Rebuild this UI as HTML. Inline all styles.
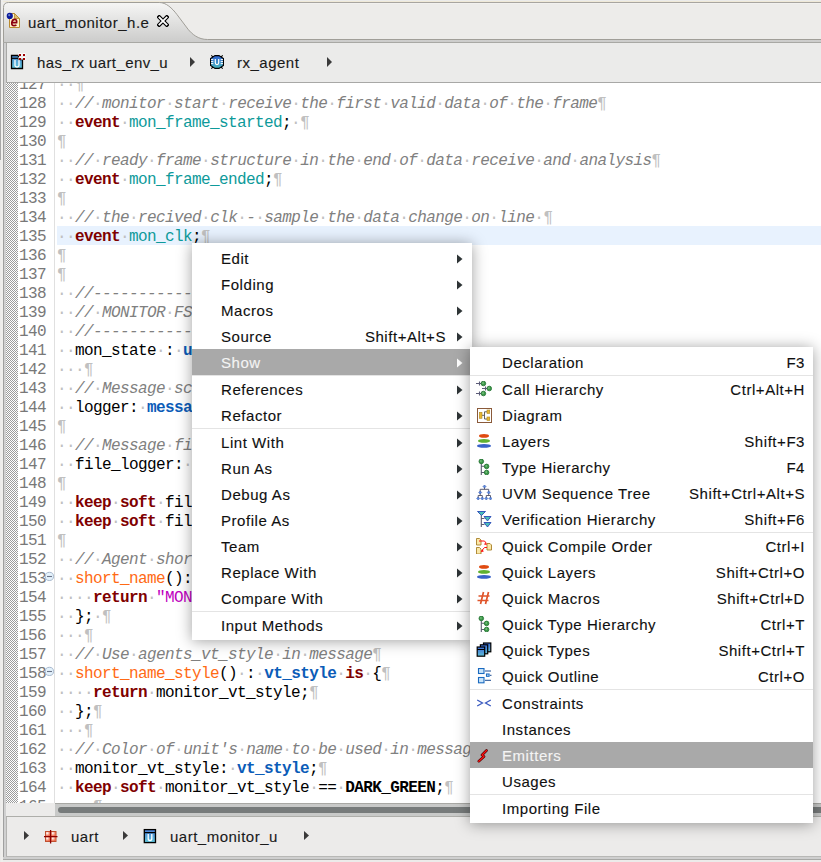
<!DOCTYPE html><html><head><meta charset="utf-8"><style>*{margin:0;padding:0;box-sizing:border-box}
html,body{width:821px;height:862px;overflow:hidden}
body{position:relative;background:#ecebea;font-family:"Liberation Sans",sans-serif;font-size:15px;color:#101010}
.abs{position:absolute}
#topstrip{left:0;top:0;width:821px;height:2px;background:#efeeec}
#tabbar{left:0;top:2px;width:821px;height:40px;background:#ebebea;border-bottom:1px solid #a8a8a6}
#leftline{left:0;top:0;width:1px;height:160px;background:#a8a8a8}
#leftline2{left:1px;top:0;width:2px;height:862px;background:#efeeec}
#leftline0{left:0;top:160px;width:1px;height:702px;background:#ecebea}
#leftline3{left:3px;top:43px;width:1px;height:817px;background:#a0a0a0}
#leftline4{left:4px;top:43px;width:2px;height:814px;background:#d0d0d0}
#tab{left:3px;top:2px;width:210px;height:40px}
#tabtxt{left:28px;top:14px;letter-spacing:0.5px;color:#1a1a1a}
#crumb{left:6px;top:43px;width:815px;height:40px;background:#ebebea;border-left:1px solid #a8a8a6;border-bottom:1px solid #a8a8a6}
.ct{position:absolute;letter-spacing:0.5px;color:#1a1a1a}
#editor{left:6px;top:83px;width:815px;height:720px;background:#ffffff;overflow:hidden}
#ruler{left:0;top:0;width:12px;height:720px;background-color:#fff;background-image:linear-gradient(45deg,#9c9c9c 25%,transparent 25%,transparent 75%,#9c9c9c 75%),linear-gradient(45deg,#9c9c9c 25%,transparent 25%,transparent 75%,#9c9c9c 75%);background-size:2px 2px;background-position:0 0,1px 1px}
#nums{left:12px;top:0;width:36px;height:720px;background:#fff}
#sepl{left:48px;top:0;width:1px;height:720px;background:#e0e0e0}
.nm{position:absolute;left:12px;width:28px;text-align:right;height:19px;line-height:19px;font-family:"Liberation Mono",monospace;font-size:16px;letter-spacing:-0.6px;color:#787878;padding-top:2px}
.ln{position:absolute;left:51px;width:770px;height:19px;line-height:19px;font-family:"Liberation Mono",monospace;font-size:16px;letter-spacing:-0.6px;color:#000;white-space:pre;padding-top:2px}
.ln.hl{background:#e8f2fe}
i.w{font-style:normal;color:#c0c0c0}
.k{color:#7f0000;font-weight:bold}
.id{color:#0e9a9a}
.c{color:#808080;font-style:italic}
.t{color:#0b5cb8;font-weight:bold}
.s{color:#c000c0}
.f{color:#ff6a14}
.b{font-weight:bold}
#hscroll{left:6px;top:803px;width:815px;height:14px;background:#ecebea;border-bottom:1px solid #aeaeaa}
#htrack{left:55px;top:803px;width:766px;height:14px;background:#c8c9c8;border-top:1px solid #a8a8a4;border-bottom:1px solid #aeaeaa}
#hthumb{left:58px;top:807px;width:770px;height:6px;background:#777b7b;border-radius:3px}
#bottombar{left:6px;top:817px;width:815px;height:40px;background:#ecebea;border-left:1px solid #b4b4b2;border-bottom:1px solid #b8b8b6}
#bottomfill{left:3px;top:857px;width:818px;height:3px;background:#cfcfcf;border-bottom:1px solid #a8a8a6}
.menu{position:absolute;background:#fff;box-shadow:0 1px 14px rgba(0,0,0,0.38)}
.mi{position:absolute;left:0;width:100%;height:26px}
.mi.sel{background:#a9a9a9;color:#f4f4f4}
.mi .lb{position:absolute;left:29px;top:5px;letter-spacing:0.55px;white-space:pre}
.sub .mi .lb{left:32px}
.mi .acc{position:absolute;right:26px;top:5px;letter-spacing:0.55px;white-space:pre}
.sub .mi .acc{right:8px}
.mi .ar{position:absolute;left:265px;top:9px}
.mi .ic{position:absolute;left:6px;top:5px;width:16px;height:16px}
.mi .ic svg{display:block}
.sep{position:absolute;left:0;width:100%;height:1px;background:#e4e4e4}
.mi .lb,.mi .acc,.ct,#tabtxt{-webkit-text-stroke:0.12px currentColor}
</style></head><body><svg class="abs" style="left:0;top:0" width="821" height="43" viewBox="0 0 821 43">
<defs><linearGradient id="tg" x1="0" y1="0" x2="0" y2="1"><stop offset="0" stop-color="#f6f6f5"/><stop offset="1" stop-color="#cbcbca"/></linearGradient></defs>
<rect x="0" y="0" width="821" height="43" fill="#ebebea"/>
<rect x="0" y="1" width="821" height="1" fill="#efe9d8"/>
<rect x="3" y="2" width="818" height="41" fill="#edecea"/>
<rect x="3" y="3" width="818" height="1" fill="#f2f1ef"/>
<rect x="159" y="2" width="662" height="1" fill="#a8a5a0"/>
<path d="M3.5 43V7.5Q3.5 2.5 8.5 2.5H159.4C166 2.5 172 8 177 14.6L188 29.2C192 34 198 39.5 207.6 39.5H821V43Z" fill="url(#tg)"/>
<path d="M3.5 43V7.5Q3.5 2.5 8.5 2.5H159.4C166 2.5 172 8 177 14.6L188 29.2C192 34 198 39.5 207.6 39.5H821" fill="none" stroke="#a09e98" stroke-width="1"/>
<rect x="3" y="42" width="818" height="1" fill="#a8a8a4"/>
</svg>
<div class="abs" id="leftline"></div><div class="abs" id="leftline0"></div><div class="abs" id="leftline2"></div><div class="abs" id="leftline3"></div><div class="abs" id="leftline4"></div>
<svg class="abs" style="left:4px;top:8px" width="24" height="24" viewBox="0 0 24 24">
<path d="M5.5 5.5H10.5L15.5 10.5V19.5H5.5Z" fill="#fff6c8" stroke="#b88a30"/><path d="M10.5 5.5V10.5H15.5Z" fill="#e0c070" stroke="#b88a30" stroke-width="0.8"/>
<path d="M8.2 14.6H12.6Q13.1 11.6 10.9 11.3Q8.3 11.1 7.8 14.6Q7.5 17.7 10 17.7Q11.4 17.7 12.4 16.9" fill="none" stroke="#8c0010" stroke-width="1.7"/>
<circle cx="5.8" cy="7.9" r="3.1" fill="#0c1a9c"/><circle cx="5.2" cy="7.2" r="1.1" fill="#6a80c0"/></svg>
<div class="abs" id="tabtxt">uart_monitor_h.e</div>
<svg class="abs" style="left:157px;top:15px" width="12" height="12" viewBox="0 0 12 12"><path d="M2.2 2.2L9.8 9.8M9.8 2.2L2.2 9.8" stroke="#000" stroke-width="4" stroke-linecap="square"/><path d="M2.4 2.4L9.6 9.6M9.6 2.4L2.4 9.6" stroke="#fff" stroke-width="1.8" stroke-linecap="square"/></svg>
<div class="abs" id="crumb"></div>
<svg class="abs" style="left:6px;top:48px" width="24" height="24" viewBox="0 0 24 24">
<defs><linearGradient id="ug" x1="0" y1="0" x2="0" y2="1"><stop offset="0" stop-color="#4a8ed8"/><stop offset="1" stop-color="#62c4d8"/></linearGradient></defs>
<path d="M5.5 7.5H12.5V11.5H16.5V20.5H5.5Z" fill="url(#ug)" stroke="#000" stroke-width="1.3"/><path d="M5.5 10.3H12.5" stroke="#000" stroke-width="1.2"/>
<path d="M9 12V17.5Q9 19 11 19Q13 19 13 17.5V12" stroke="#fff" stroke-width="1.3" fill="none"/>
<rect x="12.5" y="5" width="3" height="3" fill="#fff"/><rect x="16.5" y="5" width="3" height="3" fill="#fff"/><rect x="12.5" y="9" width="3" height="3" fill="#fff"/><rect x="16.5" y="9" width="3" height="3" fill="#fff"/>
<rect x="13" y="6" width="2" height="2" fill="#9c0000"/><rect x="17" y="6" width="2" height="2" fill="#9c0000"/><rect x="13" y="10" width="2" height="2" fill="#9c0000"/><rect x="17" y="10" width="2" height="2" fill="#9c0000"/></svg>
<div class="ct" style="left:37px;top:54px;letter-spacing:0.4px">has_rx uart_env_u</div>
<svg class="abs" style="left:190px;top:57px" width="5" height="10"><path d="M0 0L5 5L0 10Z" fill="#3a3a3a"/></svg>
<svg class="abs" style="left:204px;top:50px" width="24" height="24" viewBox="0 0 24 24">
<defs><linearGradient id="bg2" x1="0" y1="0" x2="0" y2="1"><stop offset="0" stop-color="#3060d0"/><stop offset="1" stop-color="#48b8c0"/></linearGradient></defs>
<path d="M7.3 5.3L10.3 8.3M18.7 5.3L15.7 8.3M7.3 18.7L10.3 15.7M18.7 18.7L15.7 15.7" stroke="#000" stroke-width="1.1"/>
<path d="M11 5.6H15L19.4 8.6V15.4L15 18.4H11L6.6 15.4V8.6Z" fill="url(#bg2)" stroke="#000" stroke-width="1.2"/>
<path d="M7 9.6H9.3M7 11.6H9.3M7 13.6H9.3M16.7 9.6H19M16.7 11.6H19M16.7 13.6H19" stroke="#fff" stroke-width="1"/>
<path d="M11.3 9V12.8Q11.3 14.6 13 14.6Q14.7 14.6 14.7 12.8V9" stroke="#fff" stroke-width="1.2" fill="none"/></svg>
<div class="ct" style="left:237px;top:54px">rx_agent</div>
<svg class="abs" style="left:327px;top:57px" width="5" height="10"><path d="M0 0L5 5L0 10Z" fill="#3a3a3a"/></svg>
<div class="abs" id="editor">
 <div class="abs" id="ruler"></div>
 <div class="abs" id="nums"></div><div class="abs" style="left:0;top:-83px;width:60px;height:903px"><div class="nm" style="top:74px">127</div><div class="nm" style="top:93px">128</div><div class="nm" style="top:112px">129</div><div class="nm" style="top:131px">130</div><div class="nm" style="top:150px">131</div><div class="nm" style="top:169px">132</div><div class="nm" style="top:188px">133</div><div class="nm" style="top:207px">134</div><div class="nm" style="top:226px">135</div><div class="nm" style="top:245px">136</div><div class="nm" style="top:264px">137</div><div class="nm" style="top:283px">138</div><div class="nm" style="top:302px">139</div><div class="nm" style="top:321px">140</div><div class="nm" style="top:340px">141</div><div class="nm" style="top:359px">142</div><div class="nm" style="top:378px">143</div><div class="nm" style="top:397px">144</div><div class="nm" style="top:416px">145</div><div class="nm" style="top:435px">146</div><div class="nm" style="top:454px">147</div><div class="nm" style="top:473px">148</div><div class="nm" style="top:492px">149</div><div class="nm" style="top:511px">150</div><div class="nm" style="top:530px">151</div><div class="nm" style="top:549px">152</div><div class="nm" style="top:568px">153</div><div class="nm" style="top:587px">154</div><div class="nm" style="top:606px">155</div><div class="nm" style="top:625px">156</div><div class="nm" style="top:644px">157</div><div class="nm" style="top:663px">158</div><div class="nm" style="top:682px">159</div><div class="nm" style="top:701px">160</div><div class="nm" style="top:720px">161</div><div class="nm" style="top:739px">162</div><div class="nm" style="top:758px">163</div><div class="nm" style="top:777px">164</div><div class="nm" style="top:796px">165</div></div>
 <div class="abs" id="sepl"></div>
 <div class="abs" style="left:0;top:-83px;width:816px;height:903px"><div class="ln" style="top:74px"><i class="w">·</i><i class="w">·</i><i class="w">¶</i></div><div class="ln" style="top:93px"><i class="w">·</i><i class="w">·</i><span class="c">//</span><i class="w">·</i><span class="c">monitor</span><i class="w">·</i><span class="c">start</span><i class="w">·</i><span class="c">receive</span><i class="w">·</i><span class="c">the</span><i class="w">·</i><span class="c">first</span><i class="w">·</i><span class="c">valid</span><i class="w">·</i><span class="c">data</span><i class="w">·</i><span class="c">of</span><i class="w">·</i><span class="c">the</span><i class="w">·</i><span class="c">frame</span><i class="w">¶</i></div><div class="ln" style="top:112px"><i class="w">·</i><i class="w">·</i><span class="k">event</span><i class="w">·</i><span class="id">mon_frame_started</span>;<i class="w">·</i><i class="w">¶</i></div><div class="ln" style="top:131px"><i class="w">¶</i></div><div class="ln" style="top:150px"><i class="w">·</i><i class="w">·</i><span class="c">//</span><i class="w">·</i><span class="c">ready</span><i class="w">·</i><span class="c">frame</span><i class="w">·</i><span class="c">structure</span><i class="w">·</i><span class="c">in</span><i class="w">·</i><span class="c">the</span><i class="w">·</i><span class="c">end</span><i class="w">·</i><span class="c">of</span><i class="w">·</i><span class="c">data</span><i class="w">·</i><span class="c">receive</span><i class="w">·</i><span class="c">and</span><i class="w">·</i><span class="c">analysis</span><i class="w">¶</i></div><div class="ln" style="top:169px"><i class="w">·</i><i class="w">·</i><span class="k">event</span><i class="w">·</i><span class="id">mon_frame_ended</span>;<i class="w">¶</i></div><div class="ln" style="top:188px"><i class="w">¶</i></div><div class="ln" style="top:207px"><i class="w">·</i><i class="w">·</i><span class="c">//</span><i class="w">·</i><span class="c">the</span><i class="w">·</i><span class="c">recived</span><i class="w">·</i><span class="c">clk</span><i class="w">·</i><span class="c">-</span><i class="w">·</i><span class="c">sample</span><i class="w">·</i><span class="c">the</span><i class="w">·</i><span class="c">data</span><i class="w">·</i><span class="c">change</span><i class="w">·</i><span class="c">on</span><i class="w">·</i><span class="c">line</span><i class="w">·</i><i class="w">¶</i></div><div class="ln hl" style="top:226px"><i class="w">·</i><i class="w">·</i><span class="k">event</span><i class="w">·</i><span class="id">mon_clk</span>;<i class="w">¶</i></div><div class="ln" style="top:245px"><i class="w">¶</i></div><div class="ln" style="top:264px"><i class="w">¶</i></div><div class="ln" style="top:283px"><i class="w">·</i><i class="w">·</i><span class="c">//----------------------------------------</span><i class="w">¶</i></div><div class="ln" style="top:302px"><i class="w">·</i><i class="w">·</i><span class="c">//</span><i class="w">·</i><span class="c">MONITOR</span><i class="w">·</i><span class="c">FSM</span><i class="w">·</i><span class="c">STATE</span><i class="w">¶</i></div><div class="ln" style="top:321px"><i class="w">·</i><i class="w">·</i><span class="c">//----------------------------------------</span><i class="w">¶</i></div><div class="ln" style="top:340px"><i class="w">·</i><i class="w">·</i>mon_state<i class="w">·</i>:<i class="w">·</i><span class="t">uart_monitor_state_t</span>;<i class="w">¶</i></div><div class="ln" style="top:359px"><i class="w">·</i><i class="w">·</i><i class="w">·</i><i class="w">¶</i></div><div class="ln" style="top:378px"><i class="w">·</i><i class="w">·</i><span class="c">//</span><i class="w">·</i><span class="c">Message</span><i class="w">·</i><span class="c">scope</span><i class="w">·</i><span class="c">for</span><i class="w">·</i><span class="c">the</span><i class="w">·</i><span class="c">monitor</span><i class="w">¶</i></div><div class="ln" style="top:397px"><i class="w">·</i><i class="w">·</i>logger:<i class="w">·</i><span class="t">message_logger</span>;<i class="w">¶</i></div><div class="ln" style="top:416px"><i class="w">¶</i></div><div class="ln" style="top:435px"><i class="w">·</i><i class="w">·</i><span class="c">//</span><i class="w">·</i><span class="c">Message</span><i class="w">·</i><span class="c">file</span><i class="w">·</i><span class="c">logger</span><i class="w">¶</i></div><div class="ln" style="top:454px"><i class="w">·</i><i class="w">·</i>file_logger:<i class="w">·</i><span class="t">message_logger</span>;<i class="w">¶</i></div><div class="ln" style="top:473px"><i class="w">¶</i></div><div class="ln" style="top:492px"><i class="w">·</i><i class="w">·</i><span class="k">keep</span><i class="w">·</i><span class="k">soft</span><i class="w">·</i>file_logger.to_screen<i class="w">·</i>==<i class="w">·</i>FALSE;<i class="w">¶</i></div><div class="ln" style="top:511px"><i class="w">·</i><i class="w">·</i><span class="k">keep</span><i class="w">·</i><span class="k">soft</span><i class="w">·</i>file_logger.to_file<i class="w">·</i>==<i class="w">·</i>&quot;uart&quot;;<i class="w">¶</i></div><div class="ln" style="top:530px"><i class="w">¶</i></div><div class="ln" style="top:549px"><i class="w">·</i><i class="w">·</i><span class="c">//</span><i class="w">·</i><span class="c">Agent</span><i class="w">·</i><span class="c">short</span><i class="w">·</i><span class="c">name</span><i class="w">·</i><span class="c">for</span><i class="w">·</i><span class="c">messages</span><i class="w">¶</i></div><div class="ln" style="top:568px"><i class="w">·</i><i class="w">·</i><span class="f">short_name</span>():<i class="w">·</i><span class="t">string</span><i class="w">·</i><span class="k">is</span><i class="w">·</i>{<i class="w">¶</i></div><div class="ln" style="top:587px"><i class="w">·</i><i class="w">·</i><i class="w">·</i><i class="w">·</i><span class="k">return</span><i class="w">·</i><span class="s">&quot;MONITOR&quot;</span>;<i class="w">¶</i></div><div class="ln" style="top:606px"><i class="w">·</i><i class="w">·</i>};<i class="w">·</i><i class="w">¶</i></div><div class="ln" style="top:625px"><i class="w">·</i><i class="w">·</i><i class="w">·</i><i class="w">¶</i></div><div class="ln" style="top:644px"><i class="w">·</i><i class="w">·</i><span class="c">//</span><i class="w">·</i><span class="c">Use</span><i class="w">·</i><span class="c">agents_vt_style</span><i class="w">·</i><span class="c">in</span><i class="w">·</i><span class="c">message</span><i class="w">¶</i></div><div class="ln" style="top:663px"><i class="w">·</i><i class="w">·</i><span class="f">short_name_style</span>()<i class="w">·</i>:<i class="w">·</i><span class="t">vt_style</span><i class="w">·</i><span class="k">is</span><i class="w">·</i>{<i class="w">¶</i></div><div class="ln" style="top:682px"><i class="w">·</i><i class="w">·</i><i class="w">·</i><i class="w">·</i><span class="k">return</span><i class="w">·</i>monitor_vt_style;<i class="w">¶</i></div><div class="ln" style="top:701px"><i class="w">·</i><i class="w">·</i>};<i class="w">¶</i></div><div class="ln" style="top:720px"><i class="w">·</i><i class="w">·</i><i class="w">·</i><i class="w">¶</i></div><div class="ln" style="top:739px"><i class="w">·</i><i class="w">·</i><span class="c">//</span><i class="w">·</i><span class="c">Color</span><i class="w">·</i><span class="c">of</span><i class="w">·</i><span class="c">unit&#x27;s</span><i class="w">·</i><span class="c">name</span><i class="w">·</i><span class="c">to</span><i class="w">·</i><span class="c">be</span><i class="w">·</i><span class="c">used</span><i class="w">·</i><span class="c">in</span><i class="w">·</i><span class="c">messages</span><i class="w">¶</i></div><div class="ln" style="top:758px"><i class="w">·</i><i class="w">·</i>monitor_vt_style:<i class="w">·</i><span class="t">vt_style</span>;<i class="w">¶</i></div><div class="ln" style="top:777px"><i class="w">·</i><i class="w">·</i><span class="k">keep</span><i class="w">·</i><span class="k">soft</span><i class="w">·</i>monitor_vt_style<i class="w">·</i>==<i class="w">·</i><span class="b">DARK_GREEN</span>;<i class="w">¶</i></div><div class="ln" style="top:796px"><i class="w">·</i><i class="w">·</i><i class="w">·</i><i class="w">·</i><i class="w">¶</i></div></div>
</div>
<svg class="abs" style="left:44px;top:571px" width="11" height="11" viewBox="0 0 11 11"><circle cx="5.4" cy="5.4" r="4.1" fill="#e4f2fc" stroke="#a8b8cc" stroke-width="1"/><path d="M3 5.5H8" stroke="#6a7488" stroke-width="1.1"/></svg>
<svg class="abs" style="left:44px;top:666px" width="11" height="11" viewBox="0 0 11 11"><circle cx="5.4" cy="5.4" r="4.1" fill="#e4f2fc" stroke="#a8b8cc" stroke-width="1"/><path d="M3 5.5H8" stroke="#6a7488" stroke-width="1.1"/></svg>
<div class="abs" id="hscroll"></div><div class="abs" id="htrack"></div>
<div class="abs" id="hthumb"></div>
<div class="abs" id="bottombar"></div><div class="abs" id="bottomfill"></div>
<svg class="abs" style="left:24px;top:831px" width="5" height="9"><path d="M0 0L5 4.5L0 9Z" fill="#3a3a3a"/></svg>
<svg class="abs" style="left:42px;top:828px" width="18" height="18" viewBox="0 0 18 18">
<defs><radialGradient id="rg" cx="0.3" cy="0.3" r="0.7"><stop offset="0" stop-color="#fff"/><stop offset="1" stop-color="#f07050"/></radialGradient></defs>
<rect x="3.5" y="3.5" width="10.5" height="10" fill="#f48060" stroke="#c05030"/>
<rect x="4" y="4" width="4" height="4" fill="url(#rg)"/><rect x="9.5" y="4" width="4" height="4" fill="url(#rg)"/><rect x="4" y="9" width="4" height="4" fill="url(#rg)"/><rect x="9.5" y="9" width="4" height="4" fill="url(#rg)"/>
<path d="M8.6 2V15.5M2 8.6H15.5" stroke="#8c0000" stroke-width="1.3"/></svg>
<div class="ct" style="left:71px;top:828px">uart</div>
<svg class="abs" style="left:123px;top:831px" width="5" height="9"><path d="M0 0L5 4.5L0 9Z" fill="#3a3a3a"/></svg>
<svg class="abs" style="left:140px;top:826px" width="20" height="20" viewBox="0 0 20 20">
<defs><linearGradient id="ug2" x1="0" y1="0" x2="0" y2="1"><stop offset="0" stop-color="#4a80d8"/><stop offset="1" stop-color="#62c4d8"/></linearGradient></defs>
<rect x="4.3" y="3.6" width="11.2" height="13" fill="url(#ug2)" stroke="#000" stroke-width="1.3"/><path d="M4.3 6.6H15.5" stroke="#000" stroke-width="1.2"/>
<path d="M8.2 8V12.5Q8.2 14.5 10 14.5Q11.8 14.5 11.8 12.5V8" stroke="#fff" stroke-width="1.3" fill="none"/></svg>
<div class="ct" style="left:170px;top:828px">uart_monitor_u</div>
<svg class="abs" style="left:304px;top:831px" width="5" height="9"><path d="M0 0L5 4.5L0 9Z" fill="#3a3a3a"/></svg>
<div class="menu" style="left:192px;top:243px;width:280px;height:397px"><div class="mi" style="top:2px"><span class="lb">Edit</span><svg class="ar" width="6" height="10" viewBox="0 0 6 10"><path d="M0 0.5L5.5 5L0 9.5Z" fill="#2e3436"/></svg></div><div class="mi" style="top:28px"><span class="lb">Folding</span><svg class="ar" width="6" height="10" viewBox="0 0 6 10"><path d="M0 0.5L5.5 5L0 9.5Z" fill="#2e3436"/></svg></div><div class="mi" style="top:54px"><span class="lb">Macros</span><svg class="ar" width="6" height="10" viewBox="0 0 6 10"><path d="M0 0.5L5.5 5L0 9.5Z" fill="#2e3436"/></svg></div><div class="mi" style="top:80px"><span class="lb">Source</span><span class="acc">Shift+Alt+S</span><svg class="ar" width="6" height="10" viewBox="0 0 6 10"><path d="M0 0.5L5.5 5L0 9.5Z" fill="#2e3436"/></svg></div><div class="mi sel" style="top:106px"><span class="lb">Show</span><svg class="ar" width="6" height="10" viewBox="0 0 6 10"><path d="M0 0.5L5.5 5L0 9.5Z" fill="#ffffff"/></svg></div><div class="sep" style="top:132px"></div><div class="mi" style="top:133px"><span class="lb">References</span><svg class="ar" width="6" height="10" viewBox="0 0 6 10"><path d="M0 0.5L5.5 5L0 9.5Z" fill="#2e3436"/></svg></div><div class="mi" style="top:159px"><span class="lb">Refactor</span><svg class="ar" width="6" height="10" viewBox="0 0 6 10"><path d="M0 0.5L5.5 5L0 9.5Z" fill="#2e3436"/></svg></div><div class="sep" style="top:185px"></div><div class="mi" style="top:186px"><span class="lb">Lint With</span><svg class="ar" width="6" height="10" viewBox="0 0 6 10"><path d="M0 0.5L5.5 5L0 9.5Z" fill="#2e3436"/></svg></div><div class="mi" style="top:212px"><span class="lb">Run As</span><svg class="ar" width="6" height="10" viewBox="0 0 6 10"><path d="M0 0.5L5.5 5L0 9.5Z" fill="#2e3436"/></svg></div><div class="mi" style="top:238px"><span class="lb">Debug As</span><svg class="ar" width="6" height="10" viewBox="0 0 6 10"><path d="M0 0.5L5.5 5L0 9.5Z" fill="#2e3436"/></svg></div><div class="mi" style="top:264px"><span class="lb">Profile As</span><svg class="ar" width="6" height="10" viewBox="0 0 6 10"><path d="M0 0.5L5.5 5L0 9.5Z" fill="#2e3436"/></svg></div><div class="mi" style="top:290px"><span class="lb">Team</span><svg class="ar" width="6" height="10" viewBox="0 0 6 10"><path d="M0 0.5L5.5 5L0 9.5Z" fill="#2e3436"/></svg></div><div class="mi" style="top:316px"><span class="lb">Replace With</span><svg class="ar" width="6" height="10" viewBox="0 0 6 10"><path d="M0 0.5L5.5 5L0 9.5Z" fill="#2e3436"/></svg></div><div class="mi" style="top:342px"><span class="lb">Compare With</span><svg class="ar" width="6" height="10" viewBox="0 0 6 10"><path d="M0 0.5L5.5 5L0 9.5Z" fill="#2e3436"/></svg></div><div class="sep" style="top:368px"></div><div class="mi" style="top:369px"><span class="lb">Input Methods</span><svg class="ar" width="6" height="10" viewBox="0 0 6 10"><path d="M0 0.5L5.5 5L0 9.5Z" fill="#2e3436"/></svg></div></div>
<div class="menu sub" style="left:470px;top:347px;width:343px;height:476px"><div class="mi" style="top:2px"><span class="lb">Declaration</span><span class="acc">F3</span></div><div class="sep" style="top:28px"></div><div class="mi" style="top:29px"><span class="lb">Call Hierarchy</span><span class="acc">Ctrl+Alt+H</span><span class="ic"><svg width="16" height="16" viewBox="0 0 16 16"><g stroke="#5c5c78" stroke-width="1.1" fill="none"><path d="M0 2.5H5M3.5 0.5V4.5M6 7.5H11M9.5 5.5V9.5M0 12.5H5M3.5 10.5V14.5"/></g><g fill="#3e9a4a" stroke="#1f6e2e" stroke-width="0.8"><circle cx="7.4" cy="2.5" r="2.3"/><circle cx="13.3" cy="7.5" r="2.3"/><circle cx="7.4" cy="12.5" r="2.3"/></g><g fill="#8ccc90"><circle cx="7" cy="2.1" r="0.8"/><circle cx="12.9" cy="7.1" r="0.8"/><circle cx="7" cy="12.1" r="0.8"/></g></svg></span></div><div class="mi" style="top:55px"><span class="lb">Diagram</span><span class="ic"><svg width="16" height="16" viewBox="0 0 16 16"><rect x="1.5" y="1.5" width="14" height="14" fill="#fff" stroke="#8a5a3a" stroke-width="1"/><path d="M6 8.3H8.5M8.5 4.8V12M8.5 4.8H11M8.5 12H11" stroke="#606060" stroke-width="1" fill="none"/><rect x="3.3" y="5.3" width="2.7" height="6" fill="#e8b830" stroke="#b08820" stroke-width="0.6"/><rect x="11" y="3" width="2.7" height="3.5" fill="#e8b830" stroke="#b08820" stroke-width="0.6"/><rect x="11" y="10" width="2.7" height="3.5" fill="#e8b830" stroke="#b08820" stroke-width="0.6"/></svg></span></div><div class="mi" style="top:81px"><span class="lb">Layers</span><span class="acc">Shift+F3</span><span class="ic"><svg width="16" height="16" viewBox="0 0 16 16"><ellipse cx="8" cy="2.9" rx="5" ry="1.8" fill="#e04a10"/><ellipse cx="8" cy="7.9" rx="6" ry="1.9" fill="#60b030"/><ellipse cx="8" cy="12.9" rx="7" ry="1.9" fill="#3a62c8"/></svg></span></div><div class="mi" style="top:107px"><span class="lb">Type Hierarchy</span><span class="acc">F4</span><span class="ic"><svg width="16" height="16" viewBox="0 0 16 16"><path d="M5.3 2V16M5.3 7.2H10.5M5.3 13.5H10.5" stroke="#5c5c70" stroke-width="1.1" fill="none"/><g fill="#3e9a4a" stroke="#1f6e2e" stroke-width="0.8"><circle cx="5.3" cy="2.4" r="2.3"/><circle cx="10.6" cy="7.4" r="2.3"/><circle cx="10.6" cy="13.5" r="2.3"/></g><g fill="#8ccc90"><circle cx="4.9" cy="2" r="0.8"/><circle cx="10.2" cy="7" r="0.8"/><circle cx="10.2" cy="13.1" r="0.8"/></g></svg></span></div><div class="mi" style="top:133px"><span class="lb">UVM Sequence Tree</span><span class="acc">Shift+Ctrl+Alt+S</span><span class="ic"><svg width="16" height="16" viewBox="0 0 16 16"><path d="M8.5 1.5V4.3M4.2 7.5V4.3H12.7V7.5M4.2 7.5V10.5M2.2 13.5V10.5H6.3V13.5M12.7 7.5V10.5M10.3 13.5V10.5H14.5V13.5" stroke="#5c5c70" stroke-width="1" fill="none"/><g fill="#5a8ae0" stroke="#3a5ab0" stroke-width="0.6"><path d="M8.5 0L10 1.5L8.5 3L7 1.5Z"/><path d="M4.2 6L5.7 7.5L4.2 9L2.7 7.5Z"/><path d="M12.7 6L14.2 7.5L12.7 9L11.2 7.5Z"/><path d="M2.2 12L3.7 13.5L2.2 15L0.7 13.5Z"/><path d="M6.3 12L7.8 13.5L6.3 15L4.8 13.5Z"/><path d="M10.3 12L11.8 13.5L10.3 15L8.8 13.5Z"/><path d="M14.5 12L16 13.5L14.5 15L13 13.5Z"/></g></svg></span></div><div class="mi" style="top:159px"><span class="lb">Verification Hierarchy</span><span class="acc">Shift+F6</span><span class="ic"><svg width="16" height="16" viewBox="0 0 16 16"><path d="M5.3 4V16M5.3 7.5H8.5M5.3 13.5H8.5" stroke="#5c5c70" stroke-width="1.1" fill="none"/><g fill="#48c0b8" stroke="#2a4ab8" stroke-width="0.9"><path d="M1.5 0.5H9.5L5.5 4.5Z"/><path d="M8 5.5H15L11.5 10Z"/><path d="M8 11.5H15L11.5 16Z"/></g></svg></span></div><div class="sep" style="top:185px"></div><div class="mi" style="top:186px"><span class="lb">Quick Compile Order</span><span class="acc">Ctrl+I</span><span class="ic"><svg width="16" height="16" viewBox="0 0 16 16"><g fill="#fbe8a8" stroke="#a88028" stroke-width="0.9"><path d="M0.5 0.5H3.5L5 2V7H0.5Z"/><path d="M11 5.5H14L15.5 7V12H11Z"/><path d="M0.5 9.5H3.5L5 11V16H0.5Z"/></g><path d="M3 3H8.5L10.5 5.5M11 9.5H8.5L5.5 13" stroke="#ff1010" stroke-width="1" fill="none"/><path d="M9 4.5L11.2 6.8L8.2 6.8Z M6.5 11.2L4.6 14.2L7.8 13.6Z" fill="#ff1010"/></svg></span></div><div class="mi" style="top:212px"><span class="lb">Quick Layers</span><span class="acc">Shift+Ctrl+O</span><span class="ic"><svg width="16" height="16" viewBox="0 0 16 16"><ellipse cx="8" cy="2.9" rx="5" ry="1.8" fill="#e04a10"/><ellipse cx="8" cy="7.9" rx="6" ry="1.9" fill="#60b030"/><ellipse cx="8" cy="12.9" rx="7" ry="1.9" fill="#3a62c8"/></svg></span></div><div class="mi" style="top:238px"><span class="lb">Quick Macros</span><span class="acc">Shift+Ctrl+D</span><span class="ic"><svg width="16" height="16" viewBox="0 0 16 16"><path d="M7.5 2L4.5 14M12.5 2L9.5 14M2.5 6H13.5M1.5 10.5H12.5" stroke="#e0562c" stroke-width="1.7" fill="none"/></svg></span></div><div class="mi" style="top:264px"><span class="lb">Quick Type Hierarchy</span><span class="acc">Ctrl+T</span><span class="ic"><svg width="16" height="16" viewBox="0 0 16 16"><path d="M5.3 2V16M5.3 7.2H10.5M5.3 13.5H10.5" stroke="#5c5c70" stroke-width="1.1" fill="none"/><g fill="#3e9a4a" stroke="#1f6e2e" stroke-width="0.8"><circle cx="5.3" cy="2.4" r="2.3"/><circle cx="10.6" cy="7.4" r="2.3"/><circle cx="10.6" cy="13.5" r="2.3"/></g><g fill="#8ccc90"><circle cx="4.9" cy="2" r="0.8"/><circle cx="10.2" cy="7" r="0.8"/><circle cx="10.2" cy="13.1" r="0.8"/></g></svg></span></div><div class="mi" style="top:290px"><span class="lb">Quick Types</span><span class="acc">Shift+Ctrl+T</span><span class="ic"><svg width="16" height="16" viewBox="0 0 16 16"><defs><linearGradient id="qg" x1="0" y1="0" x2="0" y2="1"><stop offset="0" stop-color="#3a6ad8"/><stop offset="1" stop-color="#60c0d8"/></linearGradient></defs><g stroke="#000" stroke-width="1.2" fill="url(#qg)"><rect x="7.5" y="1" width="7.3" height="8.8"/><rect x="4.4" y="2.8" width="7.3" height="9"/><rect x="1.2" y="5" width="7.5" height="9.2"/></g><path d="M1.2 7.5H8.7" stroke="#000" stroke-width="1"/></svg></span></div><div class="mi" style="top:316px"><span class="lb">Quick Outline</span><span class="acc">Ctrl+O</span><span class="ic"><svg width="16" height="16" viewBox="0 0 16 16"><g fill="#c8e4fa" stroke="#1a6ac0" stroke-width="1.1"><rect x="2.5" y="0.5" width="5.5" height="5"/><rect x="2.5" y="9.5" width="5.5" height="5.3"/><rect x="10.5" y="6" width="2.6" height="2.3"/></g><path d="M9 3H15M14 7.3H15.5M9 12.3H15" stroke="#1a4a90" stroke-width="1" fill="none"/></svg></span></div><div class="sep" style="top:342px"></div><div class="mi" style="top:343px"><span class="lb">Constraints</span><span class="ic"><svg width="16" height="16" viewBox="0 0 16 16"><path d="M1.2 5L6.5 8L1.2 11M14.8 5L9.5 8L14.8 11" stroke="#3a5ac0" stroke-width="1.3" fill="none"/></svg></span></div><div class="mi" style="top:369px"><span class="lb">Instances</span></div><div class="mi sel" style="top:395px"><span class="lb">Emitters</span><span class="ic"><svg width="16" height="16" viewBox="0 0 16 16"><path d="M10.5 3.5L6 8L8 9.5L2.8 14.2" stroke="#500000" stroke-width="2.6" fill="none" stroke-linecap="round" stroke-linejoin="round"/><path d="M10.5 3.5L6 8L8 9.5L2.8 14.2" stroke="#ff1010" stroke-width="1.3" fill="none" stroke-linecap="round" stroke-linejoin="round"/></svg></span></div><div class="mi" style="top:421px"><span class="lb">Usages</span></div><div class="sep" style="top:447px"></div><div class="mi" style="top:448px"><span class="lb">Importing File</span></div></div>
</body></html>
